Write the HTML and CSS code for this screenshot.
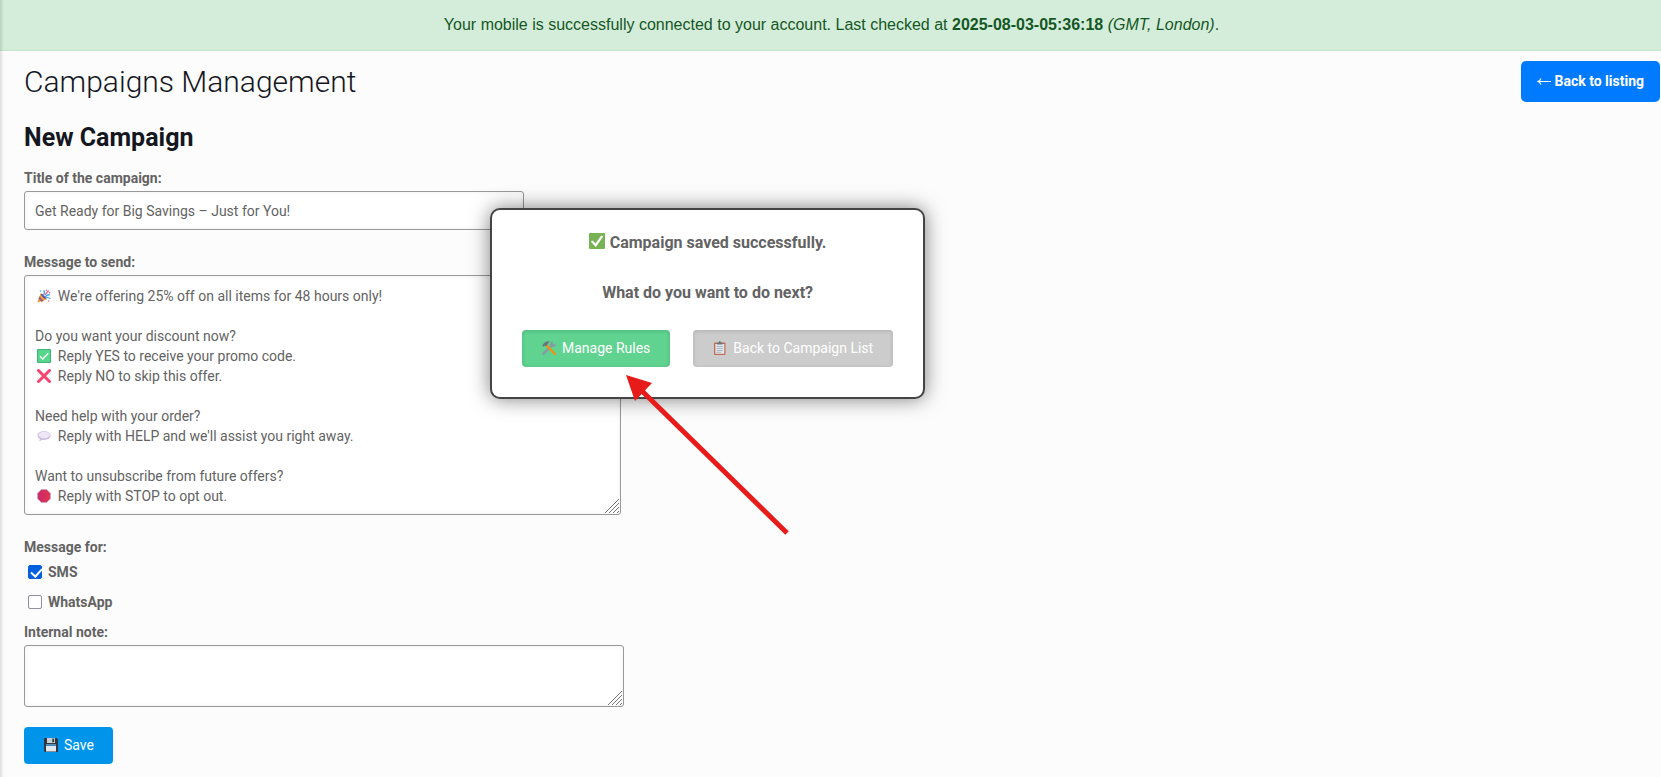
FILE: index.html
```html
<!DOCTYPE html>
<html lang="en">
<head>
  <meta charset="UTF-8" />
  <meta name="viewport" content="width=device-width, initial-scale=1" />
  <title>Campaigns Management</title>
  <link rel="stylesheet" href="styles.css">
</head>
<body>
  <div class="status-bar">
    Your mobile is successfully connected to your account. Last checked at <strong>2025-08-03-05:36:18</strong> <em>(GMT, London)</em>.
  </div>

  <main class="page">
    <header class="page-header">
      <h1>Campaigns Management</h1>
      <a href="#" class="back-link">
        <svg width="14" height="10" viewBox="0 0 14 10" fill="none" stroke="#fff" stroke-width="1.2"><path d="M14 5.500H1M4 2.500Q3 4.800 1 5.500Q3 6.200 4 8.500"/></svg>
        Back to listing
      </a>
    </header>

    <h2>New Campaign</h2>

    <form class="campaign-form" id="campaignForm">
      <label for="title">Title of the campaign:</label>
      <input type="text" id="title" name="title" class="field title-field" value="Get Ready for Big Savings – Just for You!" />

      <label for="message">Message to send:</label>
      <div class="area message-area">
        <textarea id="message" name="message" class="field">&emsp;&ensp;&hairsp;We're offering 25% off on all items for 48 hours only!

Do you want your discount now?
&emsp;&ensp;&hairsp;Reply YES to receive your promo code.
&emsp;&ensp;&hairsp;Reply NO to skip this offer.

Need help with your order?
&emsp;&ensp;&hairsp;Reply with HELP and we'll assist you right away.

Want to unsubscribe from future offers?
&emsp;&ensp;&hairsp;Reply with STOP to opt out.</textarea>
        <div class="line-icons" aria-hidden="true">
          <!-- party popper -->
          <svg class="row-1" viewBox="0 0 14 14"><path d="M3.500 4.500L9.800 10.300L1.200 13.600Q.2 13.700.6 12.600z" fill="#f0a33a"/><path d="M2.400 7.400L7 12L4.600 12.700L1.500 9.800z" fill="#9a5b86"/><path d="M3.500 4.500Q7 5 9.800 10.300Q5.500 9.500 3.500 4.500z" fill="#6b4a8c"/><path d="M6.200 6.500Q8.200 4 6.700 1.300M8 8Q10 5 13 6" stroke="#35a9ef" stroke-width="1.300" fill="none"/><path d="M8 5.800L11.700 1.500" stroke="#ef5b8c" stroke-width="1.300"/><path d="M9 8.500Q11.500 8 13.300 9.800" stroke="#3fb7ef" stroke-width="1.200" fill="none"/><circle cx="3.500" cy="2" r=".8" fill="#4ab4f0"/><circle cx="9.300" cy="1.200" r=".7" fill="#f05a9c"/><circle cx="12.700" cy="3.700" r=".8" fill="#f0529c"/><circle cx="11.800" cy="12" r=".7" fill="#f0529c"/></svg>
          <!-- check mark -->
          <svg class="row-4" viewBox="0 0 14 14"><rect width="14" height="14" rx="1" fill="#3fb57c"/><rect x="1" y="1" width="12" height="12" rx="1" fill="#54d68b"/><path d="M3 7.300L5.700 10L11.300 4.300" stroke="#fff" stroke-width="1.500" fill="none"/></svg>
          <!-- cross mark -->
          <svg class="row-5" viewBox="0 0 14 14"><path d="M1.500 1.500L12.500 12.500M12.500 1.500L1.500 12.500" stroke="#f5436f" stroke-width="3" stroke-linecap="round"/></svg>
          <!-- speech bubble -->
          <svg class="row-8" viewBox="0 0 14 14"><path d="M7 2.200C11 2.200 13.600 4 13.600 6.600S11 11 7 11Q5.800 11 4.800 10.800Q3.700 12.300 2 12.200Q3 11 2.800 10Q.4 8.700.4 6.600C.4 4 3 2.200 7 2.200z" fill="#cdbfdf"/><ellipse cx="7.200" cy="6" rx="5.700" ry="3.300" fill="#eee7f6"/></svg>
          <!-- stop sign -->
          <svg class="row-11" viewBox="0 0 14 14"><defs><linearGradient id="stop"><stop offset="0" stop-color="#c9296d"/><stop offset="1" stop-color="#e23350"/></linearGradient></defs><path d="M4.300.6h5.400l3.700 3.700v5.400l-3.700 3.700H4.300L.6 9.700V4.300z" fill="url(#stop)" stroke="#c3a5bb" stroke-width=".8"/></svg>
        </div>
        <svg class="grip" viewBox="0 0 14 14"><path d="M0 14L14 0M4 14L14 4M8 14L14 8M12 14L14 12"/></svg>
      </div>

      <fieldset class="channels">
        <legend>Message for:</legend>
        <label><input type="checkbox" name="sms" checked /> SMS</label>
        <label><input type="checkbox" name="whatsapp" /> WhatsApp</label>
      </fieldset>

      <label for="note">Internal note:</label>
      <div class="area note-area">
        <textarea id="note" name="note" class="field"></textarea>
        <svg class="grip" viewBox="0 0 14 14"><path d="M0 14L14 0M4 14L14 4M8 14L14 8M12 14L14 12"/></svg>
      </div>

      <button type="submit" class="btn btn-save">
        <svg viewBox="0 0 14 14"><path d="M.5 0H12.700L14 1.300V14H1L0 13V.5z" fill="#31373d"/><rect x="3" width="8" height="5" fill="#c5d0d8"/><rect x="8.300" y=".6" width="1.800" height="3.600" fill="#31373d"/><rect x="2" y="6.500" width="10" height="7" fill="#e1e8ed"/><rect x="2" y="6.500" width="10" height="1.500" fill="#3b88c3"/></svg>
        Save
      </button>
    </form>
  </main>

  <div class="dialog" role="dialog" aria-labelledby="dialogText">
    <div class="dialog-text" id="dialogText">
      <p><svg viewBox="0 0 16 16"><rect width="16" height="16" rx="1" fill="#77b255"/><path d="M3.300 8.700L6.700 12.200L12.800 3.600" fill="none" stroke="#fff" stroke-width="2.200" stroke-linecap="round"/></svg> Campaign saved successfully.</p>
      <p>What do you want to do next?</p>
    </div>
    <div class="dialog-buttons">
      <button type="button" class="btn btn-rules">
        <svg viewBox="0 0 14 14"><path d="M1.500 12.700L10 4.300" stroke="#8899a6" stroke-width="2.600" stroke-linecap="round"/><path d="M8 3.500Q8 .4 11.300.2L10.300 2.300L11.700 3.700L13.800 2.700Q13.800 6 10.500 6z" fill="#8899a6"/><path d="M4.300 4.300L13 13" stroke="#f4900c" stroke-width="2.200" stroke-linecap="round"/><path d="M.2 4.300L3 1.300Q5-.4 8 .6Q6 1.300 6 3L3.700 5.500L2.800 4.500L1.600 5.800z" fill="#66757f"/></svg>
        Manage Rules
      </button>
      <button type="button" class="btn btn-list">
        <svg viewBox="0 0 14 14"><rect x="1" y="1.500" width="11.500" height="12.500" rx="1" fill="#c1694f"/><rect x="2.300" y="3" width="9" height="9.800" fill="#e1e8ed"/><path d="M4 3.500V1.700H5.700Q5.700 0 6.800 0T7.900 1.700H9.500V3.500z" fill="#66757f"/><path d="M3.500 5.500H10M3.500 7.500H10M3.500 9.500H10M3.500 11.300H8" stroke="#99aab5" stroke-width=".8"/></svg>
        Back to Campaign List
      </button>
    </div>
  </div>

  <svg class="pointer" viewBox="0 0 164 162" aria-hidden="true"><path d="M16 16L161 158" stroke="#e81b1b" stroke-width="5"/><path d="M0 0L26 8L9 26z" fill="#e81b1b"/></svg>
</body>
</html>
```

FILE: styles.css
```css
* {
  margin: 0;
  padding: 0;
  box-sizing: border-box;
}
body {
  position: relative;
  min-height: 100vh;
  background: #fcfcfc;
  color: #636363;
  font-family: Roboto, sans-serif;
  font-size: 14px;
  line-height: 20px;
}
body::before {
  content: "";
  position: absolute;
  left: 0;
  top: 0;
  bottom: 0;
  width: 4px;
  background: linear-gradient(to right, rgba(0, 0, 0, 0.12), rgba(0, 0, 0, 0));
}
.status-bar {
  padding: 15px 0 15px 2px;
  background: #d4edda;
  border-bottom: 1px solid #c3e6cb;
  color: #155724;
  font-family: "Liberation Sans", Arial, sans-serif;
  font-size: 16px;
  text-align: center;
}
.page {
  padding: 10px 0 12px 24px;
}
.page-header {
  display: flex;
  justify-content: space-between;
  align-items: center;
  padding-right: 1px;
}
h1 {
  color: #15171f;
  font-size: 30px;
  font-weight: 300;
  line-height: 40px;
}
.back-link {
  display: flex;
  align-items: center;
  gap: 3px;
  padding: 10px 16px 11px;
  border-radius: 5px;
  background: #007bff;
  color: #fff;
  font-weight: bold;
  text-decoration: none;
}
h2 {
  margin: 21px 0 15px;
  color: #15171f;
  font-size: 25px;
  font-weight: bold;
  line-height: 30px;
}
.campaign-form {
  display: flex;
  flex-direction: column;
  align-items: flex-start;
}
.campaign-form label,
legend {
  margin-bottom: 3px;
  font-weight: bold;
}
.field {
  display: block;
  width: 100%;
  padding: 10px;
  border: 1px solid #999;
  border-radius: 3px;
  background: #fff;
  box-shadow: inset 0 0 5px rgba(0, 0, 0, 0.06);
  color: #636363;
  font: inherit;
  outline: none;
  resize: none;
}
.title-field {
  max-width: 500px;
  height: 39px;
  margin-bottom: 22px;
}
.area {
  position: relative;
  width: 100%;
}
.message-area {
  max-width: 597px;
  margin-bottom: 22px;
}
.message-area .field {
  height: 240px;
  overflow: hidden;
}
.note-area {
  max-width: 600px;
  margin-bottom: 20px;
}
.note-area .field {
  height: 62px;
}
.grip {
  position: absolute;
  right: 2px;
  bottom: 2px;
  width: 14px;
  height: 14px;
  fill: none;
  stroke: #777;
}
/* icons sit at the start of their message lines */
.line-icons {
  position: absolute;
  left: 13px;
  top: 11px;
  display: grid;
  grid-template-rows: repeat(11, 20px);
  align-items: center;
  pointer-events: none;
}
.line-icons svg {
  width: 14px;
  height: 14px;
}
.row-1 { grid-row: 1; }
.row-4 { grid-row: 4; }
.row-5 { grid-row: 5; }
.row-8 { grid-row: 8; }
.row-11 { grid-row: 11; }
.channels {
  display: flex;
  flex-direction: column;
  border: none;
}
.channels legend {
  margin-bottom: 5px;
}
.channels label {
  display: flex;
  align-items: center;
  gap: 6px;
  margin: 0 0 10px 4px;
}
.channels input {
  width: 14px;
  height: 14px;
  border: 1px solid #8f8f9d;
  border-radius: 2px;
  background: #fff;
  appearance: none;
}
.channels input:checked {
  position: relative;
  border-color: #0060df;
  background: #0060df;
}
.channels input:checked::after {
  content: "";
  position: absolute;
  left: 4px;
  top: 0;
  width: 5px;
  height: 9px;
  border: solid #fff;
  border-width: 0 2px 2px 0;
  transform: rotate(42deg);
}
.btn {
  display: flex;
  align-items: center;
  gap: 6px;
  height: 37px;
  padding: 0 19px 1px 20px;
  border: none;
  border-radius: 4px;
  color: #fff;
  font: inherit;
  cursor: pointer;
}
.btn svg {
  width: 14px;
  height: 14px;
}
.btn-save {
  background: #0095eb;
}
.btn-rules,
.btn-list {
  padding-right: 20px;
  box-shadow: inset 0 1px 4px rgba(0, 0, 0, 0.14);
}
.btn-rules {
  background: #5fd38f;
}
.btn-list {
  background: #ccc;
}
.dialog {
  position: absolute;
  left: 490px;
  top: 208px;
  padding: 20px 30px 30px;
  border: 2px solid #444;
  border-radius: 10px;
  background: #fff;
  box-shadow: 0 0 20px rgba(0, 0, 0, 0.5);
}
.dialog-text {
  display: grid;
  gap: 25px;
  margin-bottom: 25px;
  font-size: 16px;
  font-weight: bold;
  line-height: 25px;
  text-align: center;
}
.dialog-text svg {
  width: 16px;
  height: 16px;
  margin-right: 1px;
  vertical-align: -1px;
}
.dialog-buttons {
  display: flex;
  gap: 23px;
}
.pointer {
  position: absolute;
  left: 626px;
  top: 375px;
  width: 164px;
  height: 162px;
  pointer-events: none;
}
```
